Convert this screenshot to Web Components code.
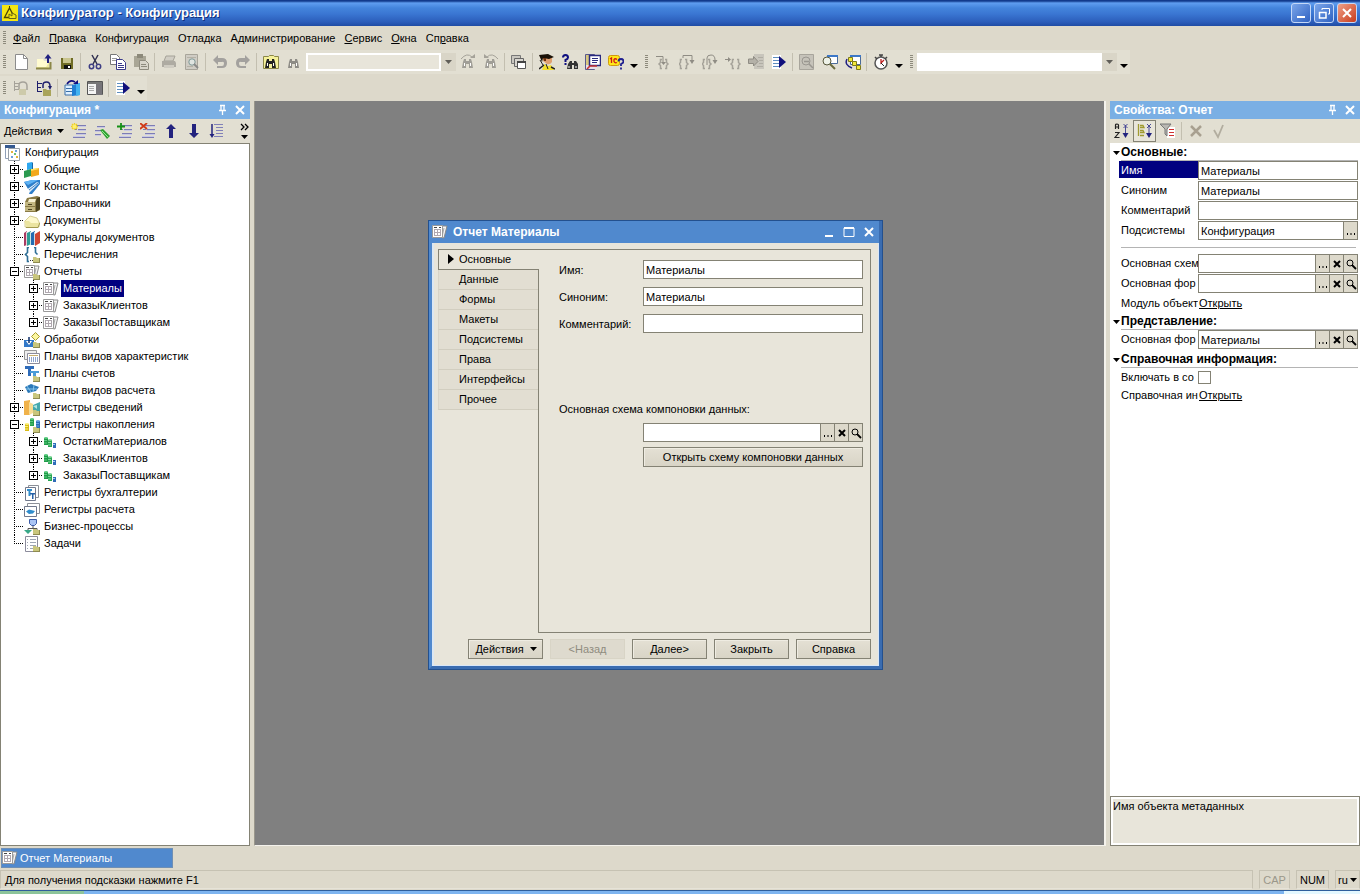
<!DOCTYPE html>
<html lang="ru">
<head>
<meta charset="utf-8">
<title>Конфигуратор - Конфигурация</title>
<style>
  html, body { height: 100%; }
  body {
    margin: 0;
    background: #ddd9cb;
    color: #000;
    font: 11px/14px "Liberation Sans", Arial, sans-serif;
    --face: #ddd9cb;
    --light: #e8e5da;
    --edge: #848274;
    --caption: #7aafe4;
    --accent: #5089ce;
    --navy: #000080;
  }
</style>
</head>
<body>
<config-app></config-app>
<script>
const BASE = `
  *, *::before, *::after { box-sizing: border-box; }
  button, input, select { font: inherit; color: inherit; margin: 0; border-radius: 0; }
  button { padding: 0; border: 0; background: none; }
  :focus-visible { outline: 1px dotted #000; }
  svg { display: block; }
`;

function define(name, css, html, init) {
  const template = document.createElement('template');
  customElements.define(name, class extends HTMLElement {
    constructor() {
      super();
      this.attachShadow({ mode: 'open' });
    }
    connectedCallback() {
      if (this.shadowRoot.childNodes.length) return;
      const body = typeof html === 'function' ? html(this) : html;
      template.innerHTML = `<style>${BASE}${css}</style>${body}`;
      this.shadowRoot.append(template.content.cloneNode(true));
      if (init) init(this, this.shadowRoot);
    }
  });
}

/* ---------- icons, all on a 16 x 16 grid ---------- */
const rows = `<g stroke="#7d7db4"><path d="M5 2.5h10M7 6.5h8M3 6.5h3M5 10.5h10M2 14.5h12"/></g><g stroke="#c8c8e4"><path d="M5 3.5h10M7 7.5h8M5 11.5h10M2 13.5h12"/></g>`;
const folderTag = `<path d="M9 10h3l1 1h3v5H9z" fill="#c9c67c"/><path d="M9 15.5h7M15.5 11v5" stroke="#8e8b50"/>`;
const binoc = c => `<path d="M2 14l1-6 1-3h2v2h3V5h2l1 3 1 6H9v-4H6v4z" fill="${c}"/><path d="M4.500 9v3M10.500 9v3" stroke="#fff"/>`.replace(/500/g, '5');
const sheet = `<path d="M9 2l6 0-3 12-5-1z" fill="#f4f4f4" stroke="#8a8a8a"/><path d="M12 4l-2 9" stroke="#aaa"/><path d="M.5 1.5h10v12H.5z" fill="#fff" stroke="#9a9a9a"/><path d="M2 5.5h7M2 8.5h7M2 11.5h7M2.5 5v7M5.5 5v7M8.5 5v7" stroke="#b0a8b0"/><path d="M2 3.5h3M7 3.5h2" stroke="#444"/>`;
const brace = (x, c) => `<path d="M${x + 3} 5.5h-1.5v3l-1.5 1.5 1.5 1.5v3h1.5M${x + 6} 5.5h1.5v3l1.5 1.5-1.5 1.5v3h-1.5" fill="none" stroke="${c}" stroke-width="1.5"/>`;
const cyl = (x, y, a, b) => `<path d="M${x} ${y}h4v7h-4z" fill="${a}"/><path d="M${x} ${y + 2.5}h3M${x} ${y + 5}h3" stroke="${b}"/><ellipse cx="${x + 2}" cy="${y}" rx="2" ry="1" fill="${b}"/>`;

const ICONS = {
  app: `<path d="M0 0h16v16H0z" fill="#f4e612"/><path d="M2.5 12.5L7.5 3l5 9.5z" fill="none" stroke="#4b4606" stroke-width="1.3"/><path d="M7.5 1v3" stroke="#4b4606"/><path d="M7 13.5V9l3 2V8l4 2v3.500z" fill="#f4e612" stroke="#6b6512"/>`,
  new: `<path d="M2.5 .5h8l4 4v11h-12z" fill="#fff" stroke="#8c8c8c"/><path d="M10.5 .5v4h4" fill="none" stroke="#8c8c8c"/>`,
  open: `<path d="M1 5h6l1 2h5v8H1z" fill="#fffbd0"/><path d="M0 13h10l3-5v7H1z" fill="#efeaa0"/><path d="M0 14.5h14.500V8" fill="none" stroke="#8b8748" stroke-width="2"/><path d="M12 9V3" stroke="#202080" stroke-width="2"/><path d="M8.5 4.500L12 0l3.500 4.500z" fill="#202080"/>`,
  save: `<path d="M2 4h12v11H2z" fill="#6e6b24"/><path d="M4 4h8v5H4z" fill="#c8c48e"/><path d="M5 11h7v4H5z" fill="#111"/><path d="M9 12h2v2H9z" fill="#fff"/>`,
  cut: `<path d="M5 1l5 9M11 1l-5 9" stroke="#303050" stroke-width="1.5"/><circle cx="4.5" cy="12.5" r="2.2" fill="none" stroke="#3d3d84" stroke-width="1.5"/><circle cx="11.5" cy="12.5" r="2.2" fill="none" stroke="#3d3d84" stroke-width="1.5"/>`,
  copy: `<path d="M.5 .5h6l3 3v7h-9z" fill="#fff" stroke="#777"/><path d="M2 4.5h5M2 6.5h5" stroke="#999"/><path d="M6.5 5.5h6l3 3v7h-9z" fill="#fff" stroke="#3b3b8a"/><path d="M8 9.5h4M8 11.5h6M8 13.5h6" stroke="#3b3b8a"/>`,
  paste: `<path d="M1 2h12v11H1z" fill="#a9a696"/><path d="M4 0h6v4H4z" fill="#8c897a"/><path d="M6.5 6.5h6l3 3v6h-9z" fill="#d8d5ca" stroke="#8e8b7e"/><path d="M8 10.5h5M8 12.5h6" stroke="#8e8b7e"/>`,
  print: `<path d="M5 2h9l-2 5H3z" fill="#d0cdc4" stroke="#a5a298"/><path d="M1 7h13l1 2v4H1z" fill="#aeaba2"/><path d="M3 11h10v3H3z" fill="#cfccc2"/>`,
  preview: `<path d="M1.5 .5h12v15h-12z" fill="#cfccc4" stroke="#a8a59a"/><path d="M3 3.5h9M3 12.5h6" stroke="#b4b1a6"/><circle cx="8" cy="8" r="3.2" fill="#dfe4e0" stroke="#7f9896"/><path d="M10 10l4 4" stroke="#8a8a88" stroke-width="2"/>`,
  undo: `<path d="M1 6l5-5v3h4q5 0 5 5t-5 5H5v-2h5q2 0 2-2.500T10 8H6v3z" fill="#a3a19e"/>`,
  redo: `<path d="M15 6l-5-5v3H6Q1 4 1 9t5 5h5v-2H6q-2 0-2-2.500T6 8h4v3z" fill="#a3a19e"/>`,
  findf: `<path d="M.5 2.5h5l1-1h4l1 1h4v12H.5z" fill="#f5f19a" stroke="#8b8748"/>${binoc('#222')}`,
  find: binoc('#8e8c86'),
  findnext: `<path d="M1 5q6-7 11-2" fill="none" stroke="#a5a299"/><path d="M10 4h5V0z" fill="#a5a299"/>${binoc('#a09e97')}`,
  findprev: `<path d="M15 5Q9-2 4 3" fill="none" stroke="#a5a299"/><path d="M6 4H1V0z" fill="#a5a299"/>${binoc('#a09e97')}`,
  windows: `<path d="M.5 1.5h9v8h-9z" fill="#c9c7c0" stroke="#777"/><path d="M3.5 4.5h9v8h-9z" fill="#d8d6d0" stroke="#666"/><path d="M6.5 7.5h8v7h-8z" fill="#fff" stroke="#555"/><path d="M6 8h9" stroke="#444" stroke-width="2"/>`,
  person: `<path d="M4 3h9v5q-2 3-5 2L4 7z" fill="#e0a070"/><path d="M0 1l9-1 6 3-5 2-6-1-1 4z" fill="#1a1208"/><path d="M4 4h3v3H5z" fill="#6a3210"/><path d="M5 10l4 2 3-1 3 5H3z" fill="#f3df2c"/><path d="M7 10l2 5M1 6l3 5" stroke="#222"/><path d="M12 13l4 2M0 15l5-4" stroke="#222" stroke-width="1.5"/>`,
  helpfind: `<path d="M1 3.5Q1 1 3.5 1T6 3.5Q6 5 3.5 6v2M3.5 9v2" fill="none" stroke="#101080" stroke-width="2"/><path d="M5 15l1-5 2-3h2v2h2V7h2l2 3v5h-4v-4h-2v4z" fill="#333"/><path d="M7 12v2M14 12v2" stroke="#fff"/>`,
  book: `<path d="M.5 .5h9v15h-9z" fill="#d8c880" stroke="#5a5a8c"/><path d="M1 11h11v4H1z" fill="#e8e0e8"/><path d="M4.5 1.5h11v10h-11z" fill="#fff" stroke="#2a2a80" stroke-width="1.5"/><path d="M7 4.5h6M7 6.5h6M7 8.5h5" stroke="#2a2a80"/><path d="M2 15l3-3h7" stroke="#c83030" stroke-width="1.5" fill="none"/>`,
  help1c: `<rect x=".5" y="1.5" width="11" height="10" rx="2" fill="#ffe818" stroke="#cf9a10"/><path d="M2 5l1.5-1v5M9 5.5Q7 4 6 5.5v2Q7 9.5 9 8.500" fill="none" stroke="#d01818" stroke-width="1.3"/><path d="M10.500 7.5Q10.500 5 13 5t2.500 2.500Q15.5 9 13 10v2M13 13.5v2" fill="none" stroke="#202090" stroke-width="1.8"/>`,
  stepin: `${brace(3, '#a5a299')}<path d="M0 2.5h7V9" fill="none" stroke="#8f8c84"/><path d="M5 8h5l-2.5 3z" fill="#8f8c84"/>`,
  stepover: `${brace(0, '#a5a299')}<path d="M4 4V1.5h9V7" fill="none" stroke="#8f8c84"/><path d="M10.5 6h5L13 10z" fill="#8f8c84"/>`,
  stepout: `${brace(0, '#a5a299')}<path d="M5 11V4q0-3 4-3t4 5" fill="none" stroke="#8f8c84"/><path d="M10.5 6h5L13 10z" fill="#8f8c84"/>`,
  runto: `${brace(6, '#a5a299')}<path d="M0 5.5h4" stroke="#8f8c84"/><path d="M3 3v5l3-2.5z" fill="#8f8c84"/>`,
  curline: `<path d="M6 0h10v15H6z" fill="#c8c5bc"/><path d="M10 3.5h5M11 6.5h4M11 9.5h4M9 12.5h6" stroke="#b0ada4"/><path d="M.5 5h5V2.5L10 7.5 5.5 12V9.5h-5z" fill="#b4b1a8" stroke="#8f8c84"/>`,
  run: `<path d="M1 1h9v14H1z" fill="#fff"/><path d="M2 3.5h6M2 6.5h7M2 9.5h7M2 12.5h6" stroke="#5e8ec0"/><path d="M8 2v12l7-6z" fill="#10107c"/>`,
  calcoff: `<path d="M.5 .5h14v15H.5z" fill="#c6c3ba" stroke="#a8a59c"/><circle cx="7" cy="7" r="4" fill="none" stroke="#999690"/><path d="M5 7.5h5M10 10l4 4" stroke="#999690" stroke-width="1.5"/>`,
  calc: `<path d="M5.5 1.5h10v8h-10z" fill="#fff" stroke="#4a6a98"/><path d="M5 2h11" stroke="#3d78c8" stroke-width="2"/><circle cx="5" cy="7" r="4" fill="#eef2e8" stroke="#55553a"/><path d="M8 10l5 5" stroke="#6a6a3c" stroke-width="2"/>`,
  stack: `<path d="M5.5 1.5h10v9h-10z" fill="#fff" stroke="#4a6a98"/><path d="M5 2h11" stroke="#3d78c8" stroke-width="2"/><path d="M2 5q-3 6 5 9" fill="none" stroke="#202080" stroke-width="1.5"/><path d="M3.5 3.5h4v4h-4zM7.5 7.5h4v4h-4zM11.5 11.5h4v4h-4z" fill="#f4e93a" stroke="#7e7a18"/>`,
  timer: `<circle cx="8" cy="9" r="6" fill="#fff" stroke="#555" stroke-width="1.5"/><path d="M6 1h4M8 1v2M2 3l2 2M14 3l-2 2" stroke="#444" stroke-width="1.5"/><path d="M8 5v4l3-3" fill="none" stroke="#c02020" stroke-width="1.3"/><path d="M8 9l3 3" stroke="#222"/>`,
  treeoff: `<path d="M1.5 1v10M1 3.5h5M1 6.5h4M1 9.5h5" stroke="#a5a299"/><path d="M6 9V5q0-3 4-3t4 4v4" fill="none" stroke="#a5a299" stroke-width="1.5"/><path d="M6 9h7v6H6z" fill="#cdcaaa"/>`,
  tree: `<path d="M1.5 1v11M1 3.5h5M1 7.5h4M1 11.5h5" stroke="#20206c"/><path d="M7 8V5q0-3 3.5-3T14 6" fill="none" stroke="#20206c" stroke-width="1.5"/><path d="M12 6h4l-2 4z" fill="#20206c"/><path d="M7 9h3l1 1h4v6H7z" fill="#a9a45a"/>`,
  dbupdate: `<path d="M1 5h8v10H1z" fill="#dff0ff" stroke="#3a6fa8"/><path d="M2 8.5h6M2 11.5h6" stroke="#3a6fa8"/><path d="M8 5l8-2v12l-8 1z" fill="#1f7fd4"/><path d="M12 4l4-1v12l-4 1z" fill="#41b2f0"/><path d="M3 4q3-5 8-2" fill="none" stroke="#101080" stroke-width="1.5"/><path d="M9 4h5V0z" fill="#101080"/>`,
  dbwin: `<path d="M.5 1.5h15v13H.5z" fill="#f4f4f4" stroke="#555"/><path d="M1 3h14" stroke="#777" stroke-width="2"/><path d="M9 4h6v11H9z" fill="#77757a"/><path d="M2 6.5h5M2 8.5h5M2 10.5h5" stroke="#aaa"/>`,
  tadd: `${rows}<path d="M3.5 0v7M0 3.5h7M1 1l5 5M6 1L1 6" stroke="#f0cf20" stroke-width="1.3"/><circle cx="3.5" cy="3.5" r="2" fill="#fff06a"/>`,
  tedit: `<g stroke="#7d7db4"><path d="M3 3.5h8M1 7.5h8M1 11.5h6"/></g><g stroke="#c8c8e4"><path d="M3 4.5h8M1 8.5h6M1 12.5h6"/></g><path d="M6 7l3-1 7 7-3 3z" fill="#2fa02f"/><path d="M8 8l6 6" stroke="#8fe88f"/>`,
  tins: `${rows}<path d="M0 3.5h8M4 0v7" stroke="#159015" stroke-width="1.8"/>`,
  tdel: `${rows}<path d="M0 0l7 6M7 0L0 6" stroke="#d03a18" stroke-width="1.8"/>`,
  up: `<path d="M8 1l5 5h-3v9H6V6H3z" fill="#23237e"/>`,
  down: `<path d="M8 15l5-5h-3V1H6v9H3z" fill="#23237e"/>`,
  sort: `<g stroke="#8080b8"><path d="M5 1.5h9M7 4.5h7M7 7.5h7M7 10.5h7M5 13.5h9"/></g><path d="M3 1v11" stroke="#23237e" stroke-width="1.5"/><path d="M.5 11h5L3 15z" fill="#23237e"/>`,
  az: `<path d="M1.5 6V2q0-1 1.5-1t1.5 1v4M1.5 4h3M1 9.5h4l-4 5h4.500" fill="none" stroke="#222" stroke-width="1.2"/><path d="M11.5 2v10M9.5 1l4 4M13.5 1l-4 4" stroke="#4b4b96"/><path d="M8.5 10h6l-3 5z" fill="#23237e"/>`,
  cats: `<path d="M1.5 1v12M3 2.5h3l1 2H3M3 7.5h3l1 2H3M3 12.5h4" fill="none" stroke="#a09a30" stroke-width="1.3"/><path d="M12 2v10M10 1l4 4M14 1l-4 4" stroke="#4b4b96"/><path d="M9 10h6l-3 5z" fill="#23237e"/>`,
  filter: `<path d="M7 4h8v11H7z" fill="#fff"/><path d="M0 1h11L7 6v7L5 11V6z" fill="#b9b7b2" stroke="#777"/><path d="M9 6.5h5M9 9.5h5M9 12.5h5" stroke="#d03030"/>`,
  cancel: `<path d="M3 3l10 10M13 3L3 13" stroke="#a8a090" stroke-width="2.5"/>`,
  ok: `<path d="M3 7l4 7 5-12" fill="none" stroke="#b2ad9f" stroke-width="1.8"/>`,
  root: `<path d="M.5 2.5h9v11h-9z" fill="#fff" stroke="#90a0b8"/><path d="M0 0h10v3H0z" fill="#365a90"/><path d="M3.5 3.5h11v12h-11z" fill="#fff" stroke="#98a0a8"/><path d="M6 6h2v2H6zM11 11h2v2h-2z" fill="#e2b43a"/><path d="M10 5h2v2h-2zM6 11h2v2H6z" fill="#6aa0dc"/><path d="M9 8h2v2H9z" fill="#6ec070"/>`,
  common: `<path d="M3 1l5-1v7l-5 1z" fill="#2fa8f0"/><path d="M0 9l7-2v7l-7 2z" fill="#2b9a50"/><path d="M7 8l8-2v7l-8 2z" fill="#f2a81c"/><path d="M7 7l6-1 2 1-8 2z" fill="#ffe060"/><path d="M8 0l1 1v6H8z" fill="#1668a8"/>`,
  consts: `<path d="M0 3l8-2h8v4L8 15H5l3-8-4 3z" fill="#2f7fca"/><path d="M0 3l8-2h6L4 6z" fill="#5db2f4"/><path d="M4 10l9-7 2 1-9 9z" fill="#dcebf8"/><path d="M5 11l9-7" stroke="#3f80c0"/>`,
  catalog: `<path d="M3 2l10-2 3 1v13l-4 2H1V6z" fill="#8a7b45"/><path d="M1 6h10v4H1zM1 11h10v4H1z" fill="#c2b680"/><path d="M5 3h7l-1 3H4z" fill="#f5efd0"/><path d="M4 8.5h4M4 13.5h4" stroke="#4d4420"/><path d="M13 2l3-1v12l-4 3V5z" fill="#4a421e"/>`,
  docs: `<path d="M1 8l5-5 7 2 2 4v5H1z" fill="#fdf8cc" stroke="#d4cd94"/><path d="M0 8h5l2 2h9l-2 4H3z" fill="#ebe4a0"/><path d="M2 14.5h12l2-5" fill="none" stroke="#a39a4e"/>`,
  journals: `<path d="M0 3l3-2v14l-3 1z" fill="#a83a62"/><path d="M3 3l4-2v13l-4 2z" fill="#2c9c94"/><path d="M7 3l4-2v14H7z" fill="#236bb0"/><path d="M11 4l5-3v12l-5 3z" fill="#cf4632"/><path d="M2.5 2v13M6.5 2v12M10.5 2v13" stroke="#f4f4f4" stroke-opacity=".8"/>`,
  enums: `<path d="M5 .5H3.5v5L1.5 7.5l2 2v5H5M10 .5h1.5v5l2 2" fill="none" stroke="#2f6f96" stroke-width="1.6"/><path d="M6 13.5h1M8 13.5h1" stroke="#333"/>${folderTag}`,
  reports: `${sheet}${folderTag}`,
  report: sheet,
  procs: `<path d="M0 8h10v7H0z" fill="#3278c8"/><path d="M2 9h6l-3 4z" fill="#fff"/><path d="M5 5v6" stroke="#10306a" stroke-width="1.5"/><path d="M11.5 .5l4 4-4 4-4-4z" fill="#fbf6a0" stroke="#a89c30"/>${folderTag}`,
  chars: `<path d="M.5 1.5h12v9H.5z" fill="#eee" stroke="#999"/><path d="M3.5 4.5h12v10h-12z" fill="#fff" stroke="#8c8c9c"/><path d="M5 6.5h9" stroke="#c8b070"/><path d="M5.5 8v5M7.5 8v5M9.5 8v5M11.5 8v5M13.5 8v5" stroke="#8fa4cc"/>`,
  accounts: `<path d="M1 0h9v3H7v7H4V3H1z" fill="#2f6cba"/><path d="M6 5h9v2h-3v4h-3V7H6z" fill="#4c9cd8"/>${folderTag}`,
  calcs: `<path d="M1 4l6-3 8 3-3 4-8 2z" fill="#2b78b8"/><path d="M3 3l4 6M10 2l-1 7M2 6h11" stroke="#86c4ea"/>${folderTag}`,
  inforeg: `<path d="M0 1l6-1v15H0z" fill="#f0b24a"/><path d="M5 2l4 2v9l-4 2z" fill="#f7dc94"/><path d="M9 5l7-3v9H9z" fill="#45a8ae"/><path d="M9 6l4-1v4z" fill="#b4e6e0"/>${folderTag}`,
  accreg: `${cyl(1, 7, '#d8bc18', '#fff27a')}${cyl(6, 2, '#249c4c', '#5cc880')}${cyl(12, 4, '#2b6cb8', '#6aa4e4')}${folderTag}`,
  accitem: `${cyl(1, 4, '#1f9a48', '#5ccc80')}${cyl(5, 6, '#28a452', '#7ed89a')}<path d="M10 9h3v5h-3z" fill="#2f6cb8"/><path d="M10 10.5h2" stroke="#a0d0f0"/>`,
  bookreg: `<path d="M4.5 .5h10v12h-10z" fill="#fff" stroke="#8c9098"/><path d="M1.5 2.5h10v13h-10z" fill="#fff" stroke="#70788c"/><path d="M3 4h5v2H6.5v5h-2V6H3z" fill="#2f8ccc"/><path d="M6 8h5v1.5H9.5V14H8V9.5H6z" fill="#2460a8"/>`,
  calcreg: `<path d="M3.5 1.5h12v10h-12z" fill="#fff" stroke="#8c9098"/><path d="M.5 4.5h12v10H.5z" fill="#fff" stroke="#70788c"/><path d="M2 9.5l3-2 6 1.500-2 2.5-4 .5z" fill="#2f8ccc"/>`,
  process: `<path d="M5.5 .5h7v4l-2 2h-3l-2-2z" fill="#a9c4f4" stroke="#3c5ca8"/><path d="M9 7v2.5H4V12M9 9.5h4V11" fill="none" stroke="#555"/><path d="M0 11h8l-4 4z" fill="#38a888"/>${folderTag}`,
  tasks: `<path d="M1.5 .5h12v15h-12z" fill="#fff" stroke="#8c8c9c"/><path d="M3 3.5h1M3 6.5h1M3 9.5h1M3 12.5h1M6 3.5h6M6 6.5h6M6 9.5h6M6 12.5h3" stroke="#9ea6b4"/>${folderTag}`,
  pin: `<path d="M6 3.5h5M7 3v5M10 3v5M5 8.5h7M8.5 9v4" stroke="#fff" stroke-width="1.3"/>`,
  close: `<path d="M4 4l8 8M12 4l-8 8" stroke="#fff" stroke-width="2"/>`,
  min: `<path d="M4 12h8" stroke="#fff" stroke-width="2"/>`,
  max: `<path d="M3 4v8.5h10V4z" fill="none" stroke="#fff"/><path d="M3 4h10" stroke="#fff" stroke-width="2"/>`,
  restore: `<path d="M6 5V3.500h7.500V9H12" fill="none" stroke="#fff"/><path d="M3.500 7.500h6.500v5.500H3.500z" fill="none" stroke="#fff" stroke-width="1.5"/>`,
  dots: `<path d="M4 10h1v2H4zM7.500 10h1v2h-1zM11 10h1v2h-1z"/>`,
  x: `<path d="M5 5l6 6M11 5l-6 6" stroke="#000" stroke-width="2"/>`,
  lens: `<circle cx="7" cy="7" r="3" fill="none" stroke="#000"/><path d="M9 9l4 4" stroke="#000" stroke-width="1.8"/>`,
  caret: `<path d="M5 6h7l-3.5 4z"/>`,
  drop: `<path d="M4 10h8l-4 4z"/>`,
  chev: `<path d="M5 1l3 3-3 3M9 1l3 3-3 3" fill="none" stroke="#000" stroke-width="1.3"/><path d="M5 12h7l-3.5 4z"/>`,
  mark: `<path d="M5 3v10l6-5z"/>`
};

define('ui-icon', `:host { display: block; flex: none; width: 16px; height: 16px; }`,
  el => `<svg width="16" height="16" viewBox="0 0 16 16" fill="#000" aria-hidden="true">${ICONS[el.getAttribute('name')] || ''}</svg>`);

/* ---------- main window caption ---------- */
define('app-titlebar', `
  :host { display: flex; align-items: center; height: 26px; padding: 0 3px 0 2px; gap: 3px; color: #fff;
    background: linear-gradient(#123a8c 0, #123a8c 1px, #5f9df0 3px, #4384dc 8px, #3a76d2 14px, #2b5dba 22px, #1f4ca4 26px); }
  h1 { flex: 1; margin: 0; font-size: 13px; line-height: 16px; text-shadow: 1px 1px #12307c; }
  button { display: grid; place-items: center; width: 20px; height: 20px; border: 1px solid #c4d8f8; border-radius: 3px;
    background: linear-gradient(135deg, #7ba6ea, #2f62c2); }
  .close { background: linear-gradient(135deg, #f0a088, #c83c1c); }
`, `
  <ui-icon name="app"></ui-icon><h1><slot></slot></h1>
  <button aria-label="Свернуть"><ui-icon name="min"></ui-icon></button>
  <button aria-label="Восстановить"><ui-icon name="restore"></ui-icon></button>
  <button class="close" aria-label="Закрыть"><ui-icon name="close"></ui-icon></button>
`);

/* ---------- bars ---------- */
define('bar-grip', `
  :host { display: block; flex: none; width: 3px; height: 14px; margin: 0 3px;
    background: repeating-linear-gradient(#8d8a7c 0 1px, transparent 1px 2px); }
  :host([wide]) { margin: 0 4px 0 5px; }
`, '');
define('bar-sep', `:host { display: block; flex: none; width: 1px; height: 18px; margin: 0 2px; background: #c3bfb0; }`, '');

define('menu-bar', `
  :host { display: flex; align-items: center; height: 24px; }
  nav { display: flex; gap: 1px; }
  button { padding: 2px 4px; height: 18px; line-height: 14px; }
`, el => `<bar-grip></bar-grip><nav>${el.getAttribute('items').split(',').map(t =>
  `<button>${t.replace(/_(.)/, '<u>$1</u>')}</button>`).join('')}</nav>`);

define('tool-button', `
  :host { display: block; flex: none; }
  button { display: flex; align-items: center; justify-content: center; width: 23px; height: 22px; }
  :host([narrow]) button { width: 13px; }
  :host([pressed]) button { border: 1px solid var(--edge); background: var(--light); }
`, el => `<button aria-label="${el.getAttribute('icon')}"><ui-icon name="${el.getAttribute('icon')}"></ui-icon></button>`);

define('tool-bar', `
  :host { display: flex; align-items: center; height: 24px; background: #e2dfd2; flex: none; }
`, `<slot></slot>`, el => {
  el.innerHTML = (el.getAttribute('items') || '').split(' ').filter(Boolean).map(i =>
    i === '|' ? '<bar-sep></bar-sep>'
    : i === ':' ? '<bar-grip></bar-grip>'
    : i === '::' ? '<bar-grip wide></bar-grip>'
    : i === 'drop' ? '<tool-button icon="drop" narrow></tool-button>'
    : i === 'combo' ? '<tool-combo disabled></tool-combo>'
    : i === 'search' ? '<tool-combo wide></tool-combo>'
    : `<tool-button icon="${i}"></tool-button>`).join('');
});

define('tool-combo', `
  :host { display: flex; flex: none; position: relative; width: 150px; height: 18px; margin-left: 1px; }
  :host([wide]) { width: 200px; margin-left: 0; }
  select { flex: 1; appearance: none; border: 0; padding: 0; opacity: 1;
    background: linear-gradient(#d9d5c7, #d9d5c7) right / 15px 100% no-repeat #fff; }
  :host([disabled]) select { background:
    linear-gradient(#d9d5c7, #d9d5c7) right / 15px 100% no-repeat,
    linear-gradient(#e8e5da, #e8e5da) 2px 2px / 131px 14px no-repeat #fff; }
  ui-icon { position: absolute; right: 0; top: 1px; opacity: .55; pointer-events: none; }
`, el => `<select aria-label="Поиск" ${el.hasAttribute('disabled') ? 'disabled' : ''}><option></option></select><ui-icon name="caret"></ui-icon>`);

/* ---------- docked panel ---------- */
define('dock-panel', `
  :host { display: flex; flex-direction: column; min-width: 0; min-height: 0; }
  header { display: flex; align-items: center; height: 18px; flex: none; padding: 0 2px 0 4px; gap: 2px; background: var(--caption); color: #fff; }
  h2 { flex: 1; margin: 0; font-size: 12px; line-height: 14px; }
  .bar { display: flex; align-items: center; height: 24px; flex: none; background: #e2dfd2; }
  .body { flex: 1; min-height: 0; display: flex; flex-direction: column; }
`, el => `
  <header><h2>${el.getAttribute('caption')}</h2>
    <button aria-label="Закрепить"><ui-icon name="pin"></ui-icon></button>
    <button aria-label="Закрыть"><ui-icon name="close"></ui-icon></button></header>
  <div class="bar"><slot name="bar"></slot></div>
  <div class="body"><slot></slot></div>`);

define('actions-menu', `
  :host { display: block; flex: none; }
  button { display: flex; align-items: center; width: 67px; height: 20px; padding-left: 4px; }
`, `<button>Действия<ui-icon name="caret"></ui-icon></button>`);

/* ---------- metadata tree ---------- */
const TREE = [
  [0, 'root', 'Конфигурация'],
  [1, 'common', 'Общие', 'plus'],
  [1, 'consts', 'Константы', 'plus'],
  [1, 'catalog', 'Справочники', 'plus'],
  [1, 'docs', 'Документы', 'plus'],
  [1, 'journals', 'Журналы документов'],
  [1, 'enums', 'Перечисления'],
  [1, 'reports', 'Отчеты', 'minus'],
  [2, 'report', 'Материалы', 'plus', 'selected'],
  [2, 'report', 'ЗаказыКлиентов', 'plus'],
  [2, 'report', 'ЗаказыПоставщикам', 'plus', 'last'],
  [1, 'procs', 'Обработки'],
  [1, 'chars', 'Планы видов характеристик'],
  [1, 'accounts', 'Планы счетов'],
  [1, 'calcs', 'Планы видов расчета'],
  [1, 'inforeg', 'Регистры сведений', 'plus'],
  [1, 'accreg', 'Регистры накопления', 'minus'],
  [2, 'accitem', 'ОстаткиМатериалов', 'plus'],
  [2, 'accitem', 'ЗаказыКлиентов', 'plus'],
  [2, 'accitem', 'ЗаказыПоставщикам', 'plus', 'last'],
  [1, 'bookreg', 'Регистры бухгалтерии'],
  [1, 'calcreg', 'Регистры расчета'],
  [1, 'process', 'Бизнес-процессы'],
  [1, 'tasks', 'Задачи', '', 'last']
];

define('tree-view', `
  :host { display: block; flex: 1; min-height: 0; overflow: hidden; background: #fff; border: 1px solid var(--edge); padding-left: 4px; }
`, `<slot></slot>`, el => {
  el.setAttribute('role', 'tree');
  el.innerHTML = TREE.map(([depth, icon, label, kind = '', extra = '']) =>
    `<tree-item role="treeitem" depth="${depth}" icon="${icon}" kind="${kind}" ${extra}>${label}</tree-item>`).join('');
});

define('tree-item', `
  :host { display: flex; align-items: center; height: 17px; }
  .guide { flex: none; display: grid; place-items: center; width: 19px; height: 17px;
    background: repeating-linear-gradient(#000 0 1px, transparent 1px 2px) 9px 0 / 1px 100% no-repeat; }
  .joint { background:
    repeating-linear-gradient(#000 0 1px, transparent 1px 2px) 9px 0 / 1px 100% no-repeat,
    repeating-linear-gradient(90deg, #000 0 1px, transparent 1px 2px) 9px 8px / 10px 1px no-repeat; }
  :host([last]) .joint { background-size: 1px 9px, 10px 1px; }
  .guide button { width: 9px; height: 9px; border: 1px solid #000;
    background: linear-gradient(#000, #000) center / 5px 1px no-repeat #fff; }
  .guide button.plus { background: linear-gradient(#000, #000) center / 5px 1px no-repeat, linear-gradient(#000, #000) center / 1px 5px no-repeat #fff; }
  .label { margin-left: 2px; padding: 1px 2px; height: 17px; line-height: 15px; white-space: nowrap; }
  :host([selected]) .label { background: var(--navy); color: #fff; }
`, el => {
  const depth = +el.getAttribute('depth'), kind = el.getAttribute('kind');
  const box = kind ? `<button class="${kind}" aria-label="${kind === 'plus' ? 'Развернуть' : 'Свернуть'}"></button>` : '';
  return `${depth === 2 ? '<span class="guide"></span>' : ''}${depth ? `<span class="guide joint">${box}</span>` : ''}
    <ui-icon name="${el.getAttribute('icon')}"></ui-icon><span class="label"><slot></slot></span>`;
});

/* ---------- text field with optional picker buttons ---------- */
define('pick-field', `
  :host { display: flex; flex: 1; min-width: 0; height: 19px; border: 1px solid var(--edge); background: #fff; }
  input { flex: 1; min-width: 0; border: 0; background: none; padding: 1px 2px 0; outline: 0; }
  button { display: flex; align-items: center; justify-content: center; flex: none; width: 14px; overflow: hidden; border-left: 1px solid var(--edge); background: var(--face); }
`, el => `<input aria-label="${el.getAttribute('label')}" value="${el.getAttribute('value') || ''}">` +
  (el.getAttribute('buttons') || '').split(' ').filter(Boolean).map(b => `<button aria-label="${b}"><ui-icon name="${b}"></ui-icon></button>`).join(''));

/* ---------- property grid ---------- */
define('prop-group', `
  :host { display: block; }
  :host(:not(:first-child)) { margin-top: 1px; }
  header { display: flex; align-items: center; height: 17px; }
  button { display: flex; align-items: center; justify-content: center; width: 11px; height: 16px; overflow: hidden; }
  h3 { flex: 1; margin: 0 2px 0 0; height: 16px; font-size: 12px; line-height: 15px; border-bottom: 1px solid #b4b4b4; }
`, el => `<header><button aria-label="Свернуть группу"><ui-icon name="caret"></ui-icon></button><h3>${el.getAttribute('caption')}</h3></header><slot></slot>`);

define('prop-row', `
  :host { display: flex; height: 20px; padding: 0 2px 1px 9px; }
  :host([kind="link"]), :host([kind="check"]) { height: 18px; padding-bottom: 0; align-items: center; }
  .name { flex: none; width: 79px; height: 17px; padding-left: 2px; line-height: 18px; overflow: hidden; white-space: nowrap; }
  :host([kind]) .name { height: 16px; line-height: 16px; }
  :host([selected]) .name { background: var(--navy); color: #fff; }
  a { color: #000; padding-left: 1px; line-height: 16px; }
  input { appearance: none; width: 13px; height: 13px; border: 1px solid var(--edge); background: #fff; }
`, el => {
  const label = el.getAttribute('label'), kind = el.getAttribute('kind');
  const value = el.getAttribute('value') || '';
  if (kind === 'link') return `<span class="name">${label}</span><a href="#">${value}</a>`;
  if (kind === 'check') return `<label class="name" for="f">${label}</label><input type="checkbox" id="f">`;
  return `<span class="name">${label}</span><pick-field label="${label}" value="${value}" buttons="${el.getAttribute('buttons') || ''}"></pick-field>`;
});

define('prop-grid', `
  :host { display: flex; flex-direction: column; flex: 1; min-height: 0; }
  .list { flex: 1; background: #fff; padding-top: 1px; overflow: hidden; }
  hr { margin: 6px 4px 6px 11px; border: 0; border-top: 1px solid #b4b4b4; }
  .hint { flex: none; height: 50px; margin: 0; padding: 2px; border: 1px solid var(--edge); outline: 2px solid #fff; outline-offset: -3px; background: var(--light); }
`, `
  <div class="list">
    <prop-group caption="Основные:">
      <prop-row label="Имя" value="Материалы" selected></prop-row>
      <prop-row label="Синоним" value="Материалы"></prop-row>
      <prop-row label="Комментарий"></prop-row>
      <prop-row label="Подсистемы" value="Конфигурация" buttons="dots"></prop-row>
      <hr>
      <prop-row label="Основная схем" title="Основная схема компоновки данных" buttons="dots x lens"></prop-row>
      <prop-row label="Основная фор" title="Основная форма" buttons="dots x lens"></prop-row>
      <prop-row label="Модуль объект" title="Модуль объекта" kind="link" value="Открыть"></prop-row>
    </prop-group>
    <prop-group caption="Представление:">
      <prop-row label="Основная фор" title="Основная форма" value="Материалы" buttons="dots x lens"></prop-row>
    </prop-group>
    <prop-group caption="Справочная информация:">
      <prop-row label="Включать в со" title="Включать в содержание справки" kind="check"></prop-row>
      <prop-row label="Справочная ин" title="Справочная информация" kind="link" value="Открыть"></prop-row>
    </prop-group>
  </div>
  <p class="hint">Имя объекта метаданных</p>
`);

/* ---------- report editor window ---------- */
define('push-button', `
  :host { display: block; }
  button { width: 100%; height: 20px; display: flex; align-items: center; justify-content: center; border: 1px solid var(--edge);
    background: linear-gradient(#e4e0d4, #d8d4c6); box-shadow: inset 1px 1px #efece2; white-space: nowrap; }
  button:disabled { border-color: #d8d4c6; color: #8f8c80; box-shadow: none; background: #dedace; }
  ui-icon { margin: 0 -5px 0 1px; }
`, el => `<button ${el.hasAttribute('disabled') ? 'disabled' : ''}><slot></slot>${el.hasAttribute('menu') ? '<ui-icon name="caret"></ui-icon>' : ''}</button>`);

define('report-window', `
  :host { display: flex; flex-direction: column; width: 455px; height: 450px; background: var(--light);
    border: 4px solid var(--accent); border-top-width: 1px; border-right-color: #3a6cb0; border-bottom-color: #3a6cb0;
    box-shadow: inset 2px 0 #dce7f2, inset -1px 0 #d8e6f8, inset 0 -1px #d8e6f8; outline: 1px solid #23508e; outline-offset: -1px; }
  .caption { display: flex; align-items: center; gap: 4px; height: 22px; flex: none; padding: 0 2px 0 0; background: var(--accent); color: #fff; }
  h2 { flex: 1; margin: 0; font-size: 12px; line-height: 14px; padding-left: 1px; }
  .work { flex: 1; display: flex; margin: 6px 8px 0 6px; }
  nav { flex: none; width: 101px; margin-right: -1px; z-index: 1; }
  nav button { display: flex; align-items: center; width: 100px; height: 20px; padding: 0 0 2px 20px; background: #e2ded2; border-bottom: 1px solid #d2cec0; border-left: 1px solid #d8d4c8; text-align: left; }
  nav button.on { width: 101px; height: 21px; padding-left: 4px; border: 1px solid var(--edge); border-right: 0; background: var(--light); }
  .page { flex: 1; min-width: 0; border: 1px solid var(--edge); padding: 10px 7px 0 20px; }
  .grid { display: grid; grid-template-columns: 84px 1fr; row-gap: 8px; align-items: center; }
  .grid span { white-space: nowrap; }
  .head { margin: 69px 0 7px; }
  .wide { grid-column: 2; margin-top: -3px; }
  footer { display: grid; grid-template-columns: repeat(5, 75px); justify-content: end; column-gap: 7px; padding: 6px 8px 7px; }
`, `
  <div class="caption"><ui-icon name="report"></ui-icon><h2>Отчет Материалы</h2>
    <button aria-label="Свернуть"><ui-icon name="min"></ui-icon></button>
    <button aria-label="Развернуть"><ui-icon name="max"></ui-icon></button>
    <button aria-label="Закрыть"><ui-icon name="close"></ui-icon></button></div>
  <div class="work">
    <nav><button class="on"><ui-icon name="mark"></ui-icon>Основные</button><button>Данные</button><button>Формы</button><button>Макеты</button><button>Подсистемы</button><button>Права</button><button>Интерфейсы</button><button>Прочее</button></nav>
    <div class="page">
      <div class="grid">
        <span>Имя:</span><pick-field label="Имя" value="Материалы"></pick-field>
        <span>Синоним:</span><pick-field label="Синоним" value="Материалы"></pick-field>
        <span>Комментарий:</span><pick-field label="Комментарий"></pick-field>
      </div>
      <div class="head">Основная схема компоновки данных:</div>
      <div class="grid">
        <span></span><pick-field label="Основная схема компоновки данных" buttons="dots x lens"></pick-field>
        <push-button class="wide">Открыть схему компоновки данных</push-button>
      </div>
    </div>
  </div>
  <footer><push-button menu>Действия</push-button><push-button disabled>&lt;Назад</push-button><push-button>Далее&gt;</push-button><push-button>Закрыть</push-button><push-button>Справка</push-button></footer>
`);

/* ---------- bottom bars ---------- */
define('window-tabs', `
  :host { display: flex; align-items: center; flex: none; height: 24px; padding: 0 1px; }
  button { display: flex; align-items: center; gap: 2px; width: 172px; height: 20px; border: 1px solid #6f8fb4; background: var(--accent); color: #fff; }
`, `<button><ui-icon name="report"></ui-icon>Отчет Материалы</button>`);

define('status-bar', `
  :host { display: flex; flex: none; gap: 6px; height: 20px; }
  span, button { display: flex; align-items: center; height: 19px; padding: 0 3px; border: 1px solid #c6c2b3; border-bottom-color: #e6e3d8; }
  .msg { flex: 1; padding-left: 4px; }
  .off { color: #9a978a; }
  button { width: 25px; padding: 0 0 0 2px; overflow: hidden; }
  ui-icon { margin-left: -3px; }
`, `<span class="msg">Для получения подсказки нажмите F1</span><span class="off">CAP</span><span>NUM</span><button>ru<ui-icon name="caret"></ui-icon></button>`);

define('task-strip', `
  :host { display: flex; flex: none; height: 4px; border-top: 1px solid #2f5f9c; background: #7db4f0; justify-content: space-between; }
  i { width: 84px; background: #8cc49a; }
  i + i { width: 76px; background: #e4f8ff; }
`, `<i></i><i></i>`);

/* ---------- whole window ---------- */
define('config-app', `
  :host { display: flex; flex-direction: column; min-height: 100vh; background: var(--face); }
  .row { display: flex; }
  .second { padding: 2px 0 1px; }
  main { flex: 1; display: grid; grid-template-columns: 250px minmax(0, 1fr) 250px; column-gap: 4px; min-height: 640px; }
  .desk { position: relative; background: #808080; border-right: 2px solid #f4f2ec; border-bottom: 1px solid #f4f2ec; border-left: 1px solid #9a978c; overflow: hidden; }
  report-window { position: absolute; left: 173px; top: 119px; }
  .more { margin-left: auto; }
`, `
  <app-titlebar>Конфигуратор - Конфигурация</app-titlebar>
  <menu-bar items="_Файл,_Правка,Конфигурация,Отладка,Администрирование,_Сервис,_Окна,Сп_равка"></menu-bar>
  <div class="row">
    <tool-bar items=": new open save | cut copy paste | print preview | undo redo | findf find combo findnext findprev | windows | person helpfind book help1c drop"></tool-bar>
    <tool-bar items=":: stepin stepover stepout runto curline run | calcoff calc stack | timer drop"></tool-bar>
    <tool-bar items=":: search drop"></tool-bar>
  </div>
  <div class="row second"><tool-bar items=": treeoff tree | dbupdate dbwin | run drop"></tool-bar></div>
  <main>
    <dock-panel caption="Конфигурация *">
      <actions-menu slot="bar"></actions-menu>
      <tool-bar slot="bar" items="tadd tedit tins tdel up down sort"></tool-bar>
      <tool-button slot="bar" class="more" icon="chev" narrow></tool-button>
      <tree-view></tree-view>
    </dock-panel>
    <div class="desk"><report-window></report-window></div>
    <dock-panel caption="Свойства: Отчет">
      <tool-button slot="bar" icon="az"></tool-button>
      <tool-button slot="bar" icon="cats" pressed></tool-button>
      <tool-button slot="bar" icon="filter"></tool-button>
      <bar-sep slot="bar"></bar-sep>
      <tool-button slot="bar" icon="cancel"></tool-button>
      <tool-button slot="bar" icon="ok"></tool-button>
      <prop-grid></prop-grid>
    </dock-panel>
  </main>
  <window-tabs></window-tabs>
  <status-bar></status-bar>
  <task-strip></task-strip>
`);
</script>
</body>
</html>
